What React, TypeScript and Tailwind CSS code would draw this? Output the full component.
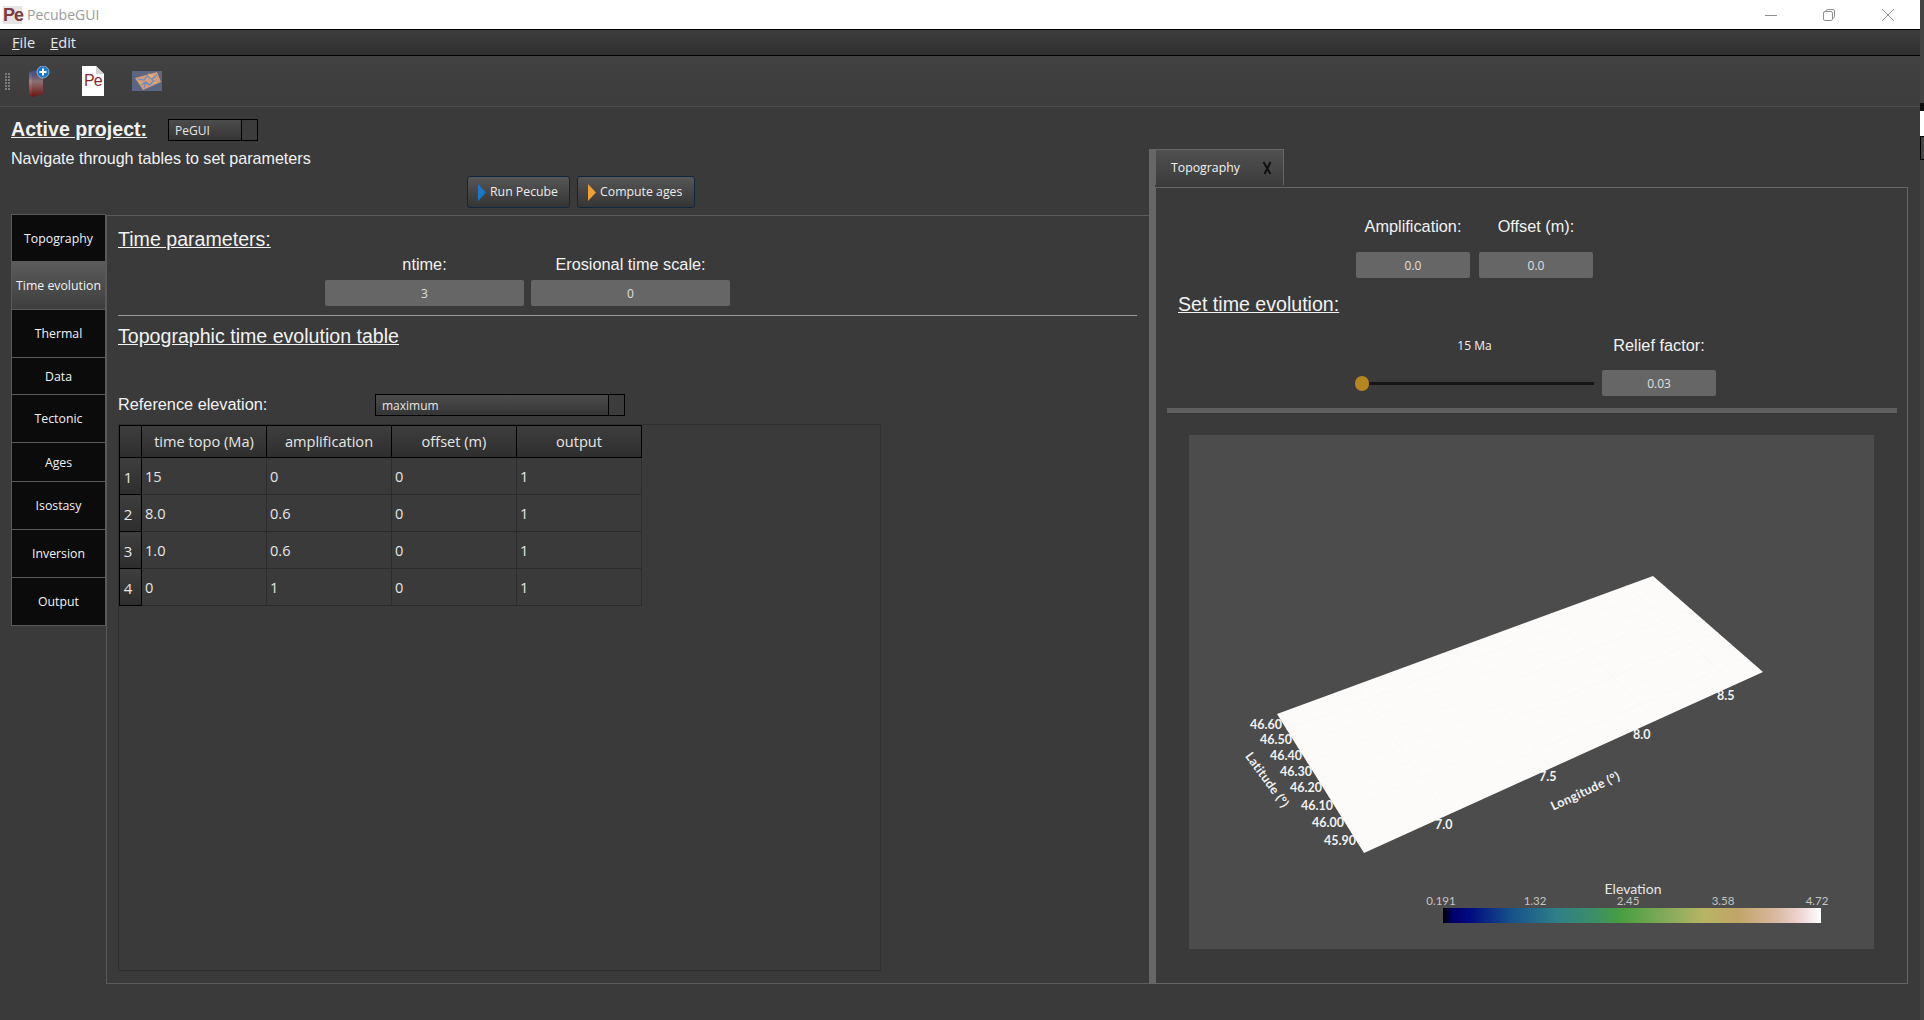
const ui = "font-['Open_Sans',sans-serif]";

const tabs = [
  { name: "Topography", h: "h-[48px]" },
  { name: "Time evolution", h: "h-[48px]", active: true },
  { name: "Thermal", h: "h-[48px]" },
  { name: "Data", h: "h-[37px]" },
  { name: "Tectonic", h: "h-[48px]" },
  { name: "Ages", h: "h-[39px]" },
  { name: "Isostasy", h: "h-[48px]" },
  { name: "Inversion", h: "h-[48px]" },
  { name: "Output", h: "h-[48px]" },
];

const columns = ["time topo (Ma)", "amplification", "offset (m)", "output"];
const rows = [
  ["15", "0", "0", "1"],
  ["8.0", "0.6", "0", "1"],
  ["1.0", "0.6", "0", "1"],
  ["0", "1", "0", "1"],
];

function WindowControls() {
  return (
    <div className="flex items-center text-[#8f8f8f]">
      <svg width="12" height="12" viewBox="0 0 12 12" className="mr-[46px]">
        <path d="M0 6.5h12" stroke="currentColor" />
      </svg>
      <svg width="12" height="12" viewBox="0 0 12 12" className="mr-[47px]" fill="none">
        <rect x="0.5" y="2.5" width="9" height="9" rx="1.5" stroke="currentColor" />
        <path d="M3 2.5V2a1.5 1.5 0 0 1 1.5-1.5h5.500A1.500 1.500 0 0 1 11.500 2v5.500A1.500 1.500 0 0 1 10 9h-.5" stroke="currentColor" />
      </svg>
      <svg width="12" height="12" viewBox="0 0 12 12" className="mr-[26px]">
        <path d="M0 0l12 12M12 0L0 12" stroke="currentColor" />
      </svg>
    </div>
  );
}

function ColumnIcon() {
  return (
    <svg width="24" height="32" viewBox="0 0 24 32">
      <defs>
        <linearGradient id="col" x1="0" y1="0" x2="0" y2="1">
          <stop offset="0" stopColor="#2f3f8f" />
          <stop offset="0.45" stopColor="#a08080" />
          <stop offset="1" stopColor="#7a1414" />
        </linearGradient>
      </defs>
      <path d="M3 6l11-3 3 3v22l-11 3-3-3z" fill="url(#col)" />
      <path d="M6 8l11-2v22l-11 3z" fill="#000" opacity="0.12" />
      <circle cx="17" cy="6" r="6" fill="#1a78c8" stroke="#bfe0f5" strokeWidth="0.6" />
      <path d="M17 2.500v7M13.500 6h7" stroke="#fff" strokeWidth="2" />
    </svg>
  );
}

function PeFileIcon() {
  return (
    <div className="relative w-[22px] h-[30px]">
      <svg width="22" height="30" viewBox="0 0 22 30" className="absolute inset-0">
        <path d="M0 0h14l8 8v22H0z" fill="#fff" />
        <path d="M14 0v8h8z" fill="#d4d4d4" />
      </svg>
      <span className="absolute left-[2px] top-[6px] text-[#8b2a2e] text-[16px] leading-[18px] tracking-[-1px] font-['Liberation_Sans',sans-serif]">
        Pe
      </span>
    </div>
  );
}

function MapIcon() {
  return (
    <svg width="30" height="20" viewBox="0 0 30 20">
      <rect width="30" height="20" fill="#5a6682" />
      <path d="M3 7L25 1l4 10-18 8z" fill="#d89a78" />
      <path d="M6 8l6 1 3-4 5 3 5-4M9 14l5-3 3 3 6-4M12 17l2-6M20 8l3 6" stroke="#5f8fc8" strokeWidth="1.200" fill="none" />
      <path d="M16 2l6 3-3 2zM7 11l3 1-1 2zM20 12l4-2-1 3z" fill="#e8b070" />
      <path d="M28 2v5" stroke="#8a5a6a" strokeWidth="1" />
    </svg>
  );
}

function Grip() {
  return (
    <div className="grid grid-cols-2 gap-[1px]">
      {[...Array(12)].map((_, i) => (
        <div key={i} className="w-[2px] h-[2px] bg-[#7a7a7a]" />
      ))}
    </div>
  );
}

function Combo({ label, className }: { label: string; className: string }) {
  return (
    <div className={`flex border border-black bg-gradient-to-b from-[#4c4c4c] to-[#353535] text-[12px] text-[#e6e6e6] ${ui} ${className}`}>
      <div className="flex-1 flex items-center pl-[6px] pt-[1px] border-r border-black">{label}</div>
      <div className="w-[15px] bg-[#3c3c3c]" />
    </div>
  );
}

function Field({ value }: { value: string }) {
  return (
    <div className={`h-[26px] pt-[1px] rounded-[2px] bg-[#666666] flex items-center justify-center text-[12px] text-[#e0e0e0] ${ui}`}>
      {value}
    </div>
  );
}

function RunButton({ label, color, className }: { label: string; color: string; className: string }) {
  return (
    <button className={`h-[32px] flex items-center rounded-[3px] border border-[#10263f] bg-gradient-to-b from-[#565656] to-[#353535] pl-[10px] text-[12.300px] text-[#ececec] ${ui} ${className}`}>
      <svg width="9" height="17" viewBox="0 0 9 17" className="mr-[3px]">
        <path d="M0 0l8 8.500-8 8.500z" fill={color} />
      </svg>
      {label}
    </button>
  );
}

function Plot() {
  // corners of the surface, relative to the plot area
  const a = [88, 279];
  const b = [464, 141];
  const c = [574, 237];
  const d = [175, 418];
  const lerp = (p: number[], q: number[], t: number) => [p[0] + (q[0] - p[0]) * t, p[1] + (q[1] - p[1]) * t];
  const latLines = [0.11, 0.23, 0.35, 0.47, 0.59, 0.71, 0.85];
  const lonLines = [0.21, 0.47, 0.73, 0.93];
  const lat = [
    ["46.60", 61, 294],
    ["46.50", 71, 309],
    ["46.40", 81, 325],
    ["46.30", 91, 341],
    ["46.20", 101, 357],
    ["46.10", 112, 375],
    ["46.00", 123, 392],
    ["45.90", 135, 410],
  ] as const;
  const lon = [
    ["7.0", 246, 394],
    ["7.5", 350, 346],
    ["8.0", 444, 304],
    ["8.5", 528, 265],
  ] as const;
  const cb = [
    ["0.191", 252],
    ["1.32", 346],
    ["2.45", 439],
    ["3.58", 534],
    ["4.72", 628],
  ] as const;
  return (
    <svg width="685" height="514" viewBox="0 0 685 514" className="bg-[#4c4c4c] font-['Lato',sans-serif]">
      <defs>
        <linearGradient id="earth">
          <stop offset="0" stopColor="#000000" />
          <stop offset="0.025" stopColor="#00006a" />
          <stop offset="0.07" stopColor="#000a80" />
          <stop offset="0.18" stopColor="#16518a" />
          <stop offset="0.3" stopColor="#2e7f88" />
          <stop offset="0.4" stopColor="#3c8f68" />
          <stop offset="0.47" stopColor="#489e40" />
          <stop offset="0.6" stopColor="#88ab5c" />
          <stop offset="0.69" stopColor="#b7b564" />
          <stop offset="0.78" stopColor="#c0a468" />
          <stop offset="0.88" stopColor="#d9b8a0" />
          <stop offset="0.95" stopColor="#efd8d8" />
          <stop offset="1" stopColor="#ffffff" />
        </linearGradient>
      </defs>
      <g fill="#f2f2f2" fontSize="12.500" fontWeight="700">
        {lat.map(([t, x, y]) => (
          <text key={t} x={x} y={y}>{t}</text>
        ))}
        {lon.map(([t, x, y]) => (
          <text key={t} x={x} y={y}>{t}</text>
        ))}
      </g>
      <text x="78" y="349" fill="#f2f2f2" fontSize="12.500" fontWeight="700" letterSpacing="0.3" transform="rotate(54 78 345)" textAnchor="middle">Latitude (°)</text>
      <text x="398" y="360" fill="#f2f2f2" fontSize="12.500" fontWeight="700" letterSpacing="0.3" transform="rotate(-25 398 360)" textAnchor="middle">Longitude (°)</text>
      <polygon points={[a, b, c, d].map((p) => p.join(",")).join(" ")} fill="#fcfbf9" />
      <g stroke="#f9f8f6" strokeWidth="1">
        {latLines.map((t) => {
          const p = lerp(a, d, t);
          const q = lerp(b, c, t);
          return <line key={t} x1={p[0]} y1={p[1]} x2={q[0]} y2={q[1]} />;
        })}
        {lonLines.map((t) => {
          const p = lerp(d, c, t);
          const q = lerp(a, b, t);
          return <line key={t} x1={p[0]} y1={p[1]} x2={q[0]} y2={q[1]} />;
        })}
      </g>
      <text x="444" y="459" fill="#e8e8e8" fontSize="14" textAnchor="middle">Elevation</text>
      <g fill="#c4c4c4" fontSize="11.500" textAnchor="middle">
        {cb.map(([t, x]) => (
          <text key={t} x={x} y="470">{t}</text>
        ))}
      </g>
      <rect x="254" y="473" width="378" height="15" fill="url(#earth)" />
    </svg>
  );
}

export default function App() {
  return (
    <div className="flex w-[1924px] h-[1020px] overflow-hidden bg-[#3a3a3a] font-['Liberation_Sans',sans-serif] text-[#f2f2f2]">
      <div className="w-[1920px] flex flex-col">
        {/* title bar */}
        <div className="h-[29px] bg-white flex items-center justify-between">
          <div className="flex items-center">
            <span className="ml-[3px] w-[19px] text-[18px] leading-[18px] font-bold tracking-[-1px] text-[#7d3b44] bg-[#e8e4e4]">Pe</span>
            <span className={`ml-[5px] text-[14px] text-[#9a9a9a] ${ui}`}>PecubeGUI</span>
          </div>
          <WindowControls />
        </div>

        {/* menu */}
        <div className={`h-[27px] flex items-center border-y border-black bg-gradient-to-b from-[#3e3e3e] to-[#2f2f2f] pl-[12px] gap-[15px] text-[14.600px] text-[#e8e8e8] ${ui}`}>
          <span><span className="underline">F</span>ile</span>
          <span><span className="underline">E</span>dit</span>
        </div>

        {/* toolbar */}
        <div className="h-[51px] flex items-center border-b border-[#4e4e4e] bg-gradient-to-b from-[#424242] to-[#3c3c3c] pl-[5px]">
          <Grip />
          <div className="ml-[16px] mt-[1px]"><ColumnIcon /></div>
          <div className="ml-[32px]"><PeFileIcon /></div>
          <div className="ml-[28px] mt-[-1px]"><MapIcon /></div>
        </div>

        <div className="h-[877px] flex">
          {/* left part */}
          <div className="w-[1149px] flex flex-col">
            <div className="h-[107px] pl-[11px] flex flex-col">
              <div className="mt-[12px] h-[22px] flex items-center">
                <span className="w-[157px] text-[19.600px] font-bold underline">Active project:</span>
                <Combo label="PeGUI" className="w-[90px] h-[22px]" />
              </div>
              <div className="mt-[7px] text-[16.100px] leading-[20px]">Navigate through tables to set parameters</div>
              <div className="mt-[8px] flex ml-[456px] gap-[7px]">
                <RunButton label="Run Pecube" color="#1a78c8" className="w-[103px]" />
                <RunButton label="Compute ages" color="#f0a030" className="w-[118px]" />
              </div>
            </div>

            <div className="flex-1 flex pl-[11px]">
              {/* vertical tabs */}
              <div className="w-[95px] flex flex-col">
                {tabs.map((t) => (
                  <div
                    key={t.name}
                    className={`${t.h} flex items-center justify-center pt-[2px] border-x border-b border-[#5a5a5a] first:border-t text-[12.300px] ${ui} ${
                      t.active ? "bg-gradient-to-b from-[#5c5c5c] to-[#3e3e3e]" : "bg-[#0b0b0b]"
                    }`}
                  >
                    {t.name}
                  </div>
                ))}
              </div>

              {/* pane */}
              <div className="flex-1 mt-[1px] border border-r-0 border-[#5a5a5a] pl-[11px] flex flex-col">
                <div className="mt-[12px] h-[22px] leading-[22px] text-[19.600px] underline">Time parameters:</div>
                <div className="mt-[5px] ml-[207px] grid grid-cols-[199px_199px] gap-x-[7px] gap-y-[7px] text-[16.300px] leading-[18px] text-center">
                  <div>ntime:</div>
                  <div>Erosional time scale:</div>
                  <Field value="3" />
                  <Field value="0" />
                </div>
                <div className="mt-[9px] h-[1px] w-[1019px] bg-[#9a9a9a]" />
                <div className="mt-[9px] h-[22px] leading-[22px] text-[19.600px] underline">Topographic time evolution table</div>
                <div className="mt-[47px] h-[22px] flex">
                  <span className="w-[257px] pt-[1px] text-[16.300px] leading-[18px]">Reference elevation:</span>
                  <Combo label="maximum" className="w-[250px] h-[22px]" />
                </div>

                {/* table */}
                <div className="mt-[8px] w-[763px] h-[547px] border border-[#2f2f2f]">
                  <div className={`grid grid-cols-[23px_125px_125px_125px_125px] text-[14.600px] text-[#e6e6e6] ${ui}`}>
                    <div className="h-[33px] border border-black bg-gradient-to-b from-[#3e3e3e] to-[#2e2e2e]" />
                    {columns.map((c) => (
                      <div key={c} className="h-[33px] flex items-center justify-center border border-l-0 border-black bg-gradient-to-b from-[#3e3e3e] to-[#2e2e2e]">
                        {c}
                      </div>
                    ))}
                    {rows.map((r, i) => (
                      <div key={i} className="contents">
                        <div className="h-[37px] flex items-center justify-center border-x border-b border-black bg-gradient-to-b from-[#3e3e3e] to-[#2e2e2e] text-[15px] pt-[3px] pr-[5px]">
                          {i + 1}
                        </div>
                        {r.map((v, j) => (
                          <div key={j} className="h-[37px] flex items-center pl-[3px] pt-[1px] border-r border-b border-[#2c2c2c]">
                            {v}
                          </div>
                        ))}
                      </div>
                    ))}
                  </div>
                </div>
                <div className="flex-1" />
              </div>
            </div>
          </div>

          {/* splitter */}
          <div className="w-[6px] mt-[42px] bg-[#676767]" />

          {/* right dock */}
          <div className="w-[753px] pt-[42px] flex flex-col">
            <div className="h-[36px] w-[129px] flex items-center border border-b-0 border-[#666666] bg-gradient-to-b from-[#505050] to-[#3c3c3c] pl-[15px]">
              <span className={`pt-[1px] text-[12.300px] ${ui}`}>Topography</span>
              <svg width="12" height="14" viewBox="0 0 12 14" className="ml-[21px]">
                <path d="M2.500 1l7 12M9.500 1l-6 12" stroke="#101010" strokeWidth="2" />
              </svg>
            </div>
            <div className="mt-[2px] flex-1 border border-[#666666] flex flex-col">
              <div className="mt-[29px] ml-[200px] grid grid-cols-[114px_114px] gap-x-[9px] gap-y-[17px] text-[16.300px] leading-[18px] text-center">
                <div>Amplification:</div>
                <div>Offset (m):</div>
                <Field value="0.0" />
                <Field value="0.0" />
              </div>
              <div className="mt-[15px] ml-[22px] h-[22px] leading-[22px] text-[19.600px] underline">Set time evolution:</div>
              <div className="mt-[21px] ml-[199px] grid grid-cols-[239px_114px] gap-x-[8px] gap-y-[15px] leading-[18px] text-center">
                <div className={`text-[12px] pt-[1px] ${ui}`}>15 Ma</div>
                <div className="text-[16.300px]">Relief factor:</div>
                <div className="h-[26px] flex items-center">
                  <div className="w-[14px] h-[15px] rounded-full bg-[#b5851f]" />
                  <div className="flex-1 h-[3px] bg-[#151515]" />
                </div>
                <Field value="0.03" />
              </div>
              <div className="mt-[12px] ml-[11px] w-[730px] h-[5px] bg-[#5f5f5f]" />
              <div className="mt-[22px] ml-[33px]">
                <Plot />
              </div>
            </div>
          </div>
        </div>
      </div>

      {/* sliver of the window behind */}
      <div className="w-[4px] flex flex-col bg-[#444444]">
        <div className="h-[103px]" />
        <div className="h-[8px] bg-[#111111]" />
        <div className="h-[25px] bg-white" />
        <div className="h-[24px] border-y border-l border-black" />
      </div>
    </div>
  );
}
